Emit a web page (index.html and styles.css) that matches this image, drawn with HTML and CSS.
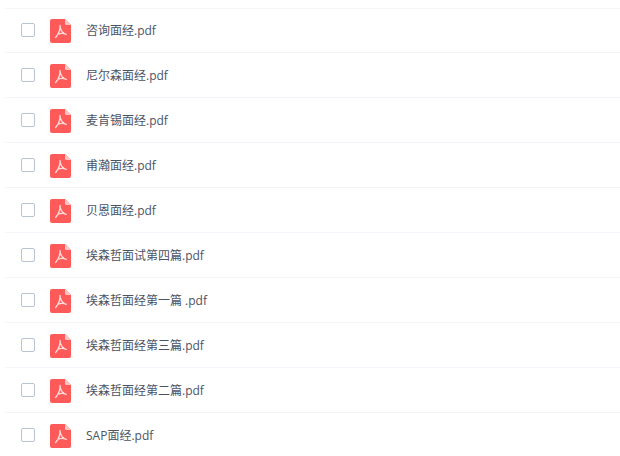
FILE: index.html
```html
<!DOCTYPE html>
<html lang="en">
<head>
  <meta charset="UTF-8" />
  <title>Files</title>
  <link rel="stylesheet" href="styles.css">
</head>
<body>

<svg class="sprite" width="0" height="0">
  <symbol id="pdfIcon" viewBox="0 0 21 24">
    <path d="M2 0H15L21 6V22a2 2 0 0 1-2 2H2a2 2 0 0 1-2-2V2a2 2 0 0 1 2-2z" fill="#ff5a5a"/>
    <path d="M15 0V4.5a1.5 1.5 0 0 0 1.5 1.5H21z" fill="#ffc4c4"/>
    <path d="M10 6.5C10.4 10 8.5 15 5.6 18.6M10 6.5C10 11 13 15 16.2 15.4M8.2 15.2C11 14 14 14.2 16.2 15.4" fill="none" stroke="#ffdcd8" stroke-width="1.3" stroke-linecap="round"/>
  </symbol>
</svg>

<ul class="file-list">
  <li class="file-row"><span class="check"></span><svg class="file-icon"><use href="#pdfIcon"/></svg><span class="file-name">咨询面经.pdf</span></li>
  <li class="file-row"><span class="check"></span><svg class="file-icon"><use href="#pdfIcon"/></svg><span class="file-name">尼尔森面经.pdf</span></li>
  <li class="file-row"><span class="check"></span><svg class="file-icon"><use href="#pdfIcon"/></svg><span class="file-name">麦肯锡面经.pdf</span></li>
  <li class="file-row"><span class="check"></span><svg class="file-icon"><use href="#pdfIcon"/></svg><span class="file-name">甫瀚面经.pdf</span></li>
  <li class="file-row"><span class="check"></span><svg class="file-icon"><use href="#pdfIcon"/></svg><span class="file-name">贝恩面经.pdf</span></li>
  <li class="file-row"><span class="check"></span><svg class="file-icon"><use href="#pdfIcon"/></svg><span class="file-name">埃森哲面试第四篇.pdf</span></li>
  <li class="file-row"><span class="check"></span><svg class="file-icon"><use href="#pdfIcon"/></svg><span class="file-name">埃森哲面经第一篇 .pdf</span></li>
  <li class="file-row"><span class="check"></span><svg class="file-icon"><use href="#pdfIcon"/></svg><span class="file-name">埃森哲面经第三篇.pdf</span></li>
  <li class="file-row"><span class="check"></span><svg class="file-icon"><use href="#pdfIcon"/></svg><span class="file-name">埃森哲面经第二篇.pdf</span></li>
  <li class="file-row"><span class="check"></span><svg class="file-icon"><use href="#pdfIcon"/></svg><span class="file-name">SAP面经.pdf</span></li>
</ul>

</body>
</html>
```

FILE: styles.css
```css
body {
  margin: 0;
  height: 456px;
  overflow: hidden;
  background-color: #ffffff;
  font-family: "Open Sans", "Noto Sans CJK SC", sans-serif;
}

.sprite {
  position: absolute;
}

.file-list {
  list-style: none;
  margin: 8px 0 0 5px;
  padding: 0;
}

.file-row {
  display: flex;
  align-items: center;
  height: 44px;
  padding-left: 16px;
  border-top: 1px solid #f2f5fa;
}

.file-row:first-child {
  height: 42px;
  padding-bottom: 1px;
  border-top-color: #f4f5f7;
}

.check {
  width: 12px;
  height: 12px;
  flex: none;
  border: 1px solid #b8c4d4;
  border-radius: 2px;
  background-color: #ffffff;
}

.file-icon {
  width: 21px;
  height: 24px;
  flex: none;
  margin: 2px 0 0 15px;
}

.file-name {
  margin: 2px 0 0 15px;
  font-size: 12px;
  line-height: 16px;
  color: #4c5364;
}
```
